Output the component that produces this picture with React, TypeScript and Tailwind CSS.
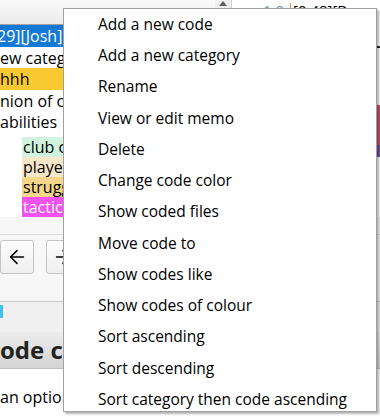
import { ArrowLeft, ArrowRight } from "lucide-react"

const menuItems = [
  "Add a new code",
  "Add a new category",
  "Rename",
  "View or edit memo",
  "Delete",
  "Change code color",
  "Show coded files",
  "Move code to",
  "Show codes like",
  "Show codes of colour",
  "Sort ascending",
  "Sort descending",
  "Sort category then code ascending",
]

const treeRows = [
  { text: "29][Josh] Add a new category", cls: "bg-[#1479d5] text-white -ml-[3px] pl-0", h: "h-[22px]" },
  { text: "ew category", cls: "bg-white text-black", h: "h-[21px]" },
  { text: "hhh", cls: "bg-[#f9c932] text-black", h: "h-[22px]" },
  { text: "nion of club", cls: "bg-white text-black", h: "h-[21px]" },
  { text: "abilities", cls: "bg-white text-black", h: "h-[21px]" },
]

const childRows = [
  { text: "club orientation", cls: "bg-[#d0f4df] text-black" },
  { text: "player", cls: "bg-[#f6e7c8] text-black" },
  { text: "struggle", cls: "bg-[#f6d68a] text-black" },
  { text: "tactics", cls: "bg-[#f252f2] text-white" },
]

export default function App() {
  return (
    <div className="relative w-[380px] h-[417px] overflow-hidden bg-white font-['Open_Sans',sans-serif] text-[15px] leading-none">
      {/* top: code tree + table */}
      <div className="flex h-[217px]">
        <div className="w-[215px] flex flex-col overflow-hidden">
          <div className="h-[25px] shrink-0 bg-gradient-to-b from-[#fafafa] to-[#ebebeb] border-b border-[#a0a0a0]" />
          {treeRows.map((r, i) => (
            <div key={i} className={`${r.h} ${r.cls} shrink-0 flex items-center whitespace-nowrap text-[16px]`}>
              {r.text}
            </div>
          ))}
          <div className="flex flex-col pl-[22px] pt-[5px]">
            {childRows.map((r, i) => (
              <div key={i} className={`h-[20px] ${r.cls} shrink-0 flex items-center whitespace-nowrap text-[16px] px-[1px]`}>
                {r.text}
              </div>
            ))}
          </div>
        </div>
        <div className="w-[17px] flex flex-col items-center border-r border-[#d0d0d0] bg-[#f0f0f0]">
          <div className="w-0 h-0 border-l-[4px] border-r-[4px] border-b-[5px] border-l-transparent border-r-transparent border-b-[#606060] mt-[1px]" />
        </div>
        <div className="flex-1 flex flex-col overflow-hidden">
          <div className="h-[9px] overflow-hidden flex items-end">
            <div className="flex items-center h-[20px] mb-[-11px] whitespace-nowrap text-[15px]">
              <span className="w-[58px] text-right pr-[6px] text-[#6f8fb0]">1 0</span>
              <span className="border-l border-[#e89a3c] pl-[2px] text-black">[0 48][Ben</span>
            </div>
          </div>
          <div className="h-[37px]" />
          <div className="h-[2px] bg-[#202020]" />
          <div className="h-[57px]" />
          <div className="h-[40px] bg-[#c8506e]" />
          <div className="h-[12px] bg-[#7050a0]" />
        </div>
      </div>

      {/* bottom: buttons + heading */}
      <div className="flex flex-col bg-[#f7f7f7]">
        <div className="h-[18px] border-b border-[#d8d8d8]" />
        <div className="flex gap-[12px] pt-[5px] h-[66px]">
          <button className="w-[34px] h-[34px] rounded-[3px] border border-[#c4c4c4] bg-gradient-to-b from-white to-[#eeeeee] text-black flex items-center justify-center">
            <ArrowLeft size={22} strokeWidth={1.7} />
          </button>
          <button className="w-[34px] h-[34px] rounded-[3px] border border-[#c4c4c4] bg-gradient-to-b from-white to-[#eeeeee] text-black flex items-center justify-center">
            <ArrowRight size={22} strokeWidth={1.7} />
          </button>
        </div>
        <div className="h-[31px] border-t border-[#c8c8c8] bg-[#f0f0f0] flex items-start pt-[3px]">
          <div className="w-[3px] h-[13px] bg-[#42c0f0]" />
        </div>
        <div className="h-[37px] bg-gradient-to-b from-[#ececec] to-[#d4d4d4] border-b border-[#c0c0c0] flex items-center font-bold text-[24px] text-[#222] whitespace-nowrap">
          ode code
        </div>
        <div className="h-[50px] bg-white flex items-center pt-[5px] text-[16px] text-black whitespace-nowrap">
          an option
        </div>
      </div>

      {/* context menu */}
      <div className="absolute left-[63px] top-[8px] w-[314px] h-[404px] bg-white border border-[#a0a0a0] shadow-[2px_2px_2px_rgba(0,0,0,0.3)] overflow-hidden">
        {menuItems.map((item) => (
          <div key={item} className="h-[31.25px] flex items-center pl-[34px] text-black text-[15.5px] whitespace-nowrap">
            {item}
          </div>
        ))}
      </div>
    </div>
  )
}
